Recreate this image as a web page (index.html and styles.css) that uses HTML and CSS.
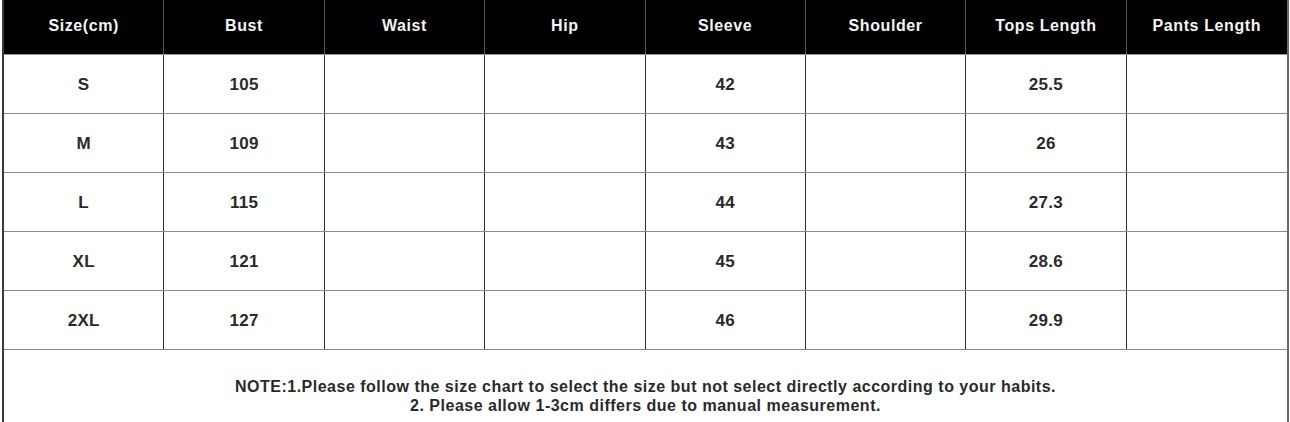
FILE: index.html
```html
<!DOCTYPE html>
<html>
<head>
<meta charset="utf-8">
<link rel="stylesheet" href="styles.css">
</head>
<body>
<div class="chart">
  <div class="row head">
    <div class="cell">Size(cm)</div>
    <div class="cell">Bust</div>
    <div class="cell">Waist</div>
    <div class="cell">Hip</div>
    <div class="cell">Sleeve</div>
    <div class="cell">Shoulder</div>
    <div class="cell">Tops Length</div>
    <div class="cell">Pants Length</div>
  </div>
  <div class="row">
    <div class="cell">S</div><div class="cell">105</div><div class="cell"></div><div class="cell"></div><div class="cell">42</div><div class="cell"></div><div class="cell">25.5</div><div class="cell"></div>
  </div>
  <div class="row">
    <div class="cell">M</div><div class="cell">109</div><div class="cell"></div><div class="cell"></div><div class="cell">43</div><div class="cell"></div><div class="cell">26</div><div class="cell"></div>
  </div>
  <div class="row">
    <div class="cell">L</div><div class="cell">115</div><div class="cell"></div><div class="cell"></div><div class="cell">44</div><div class="cell"></div><div class="cell">27.3</div><div class="cell"></div>
  </div>
  <div class="row">
    <div class="cell">XL</div><div class="cell">121</div><div class="cell"></div><div class="cell"></div><div class="cell">45</div><div class="cell"></div><div class="cell">28.6</div><div class="cell"></div>
  </div>
  <div class="row">
    <div class="cell">2XL</div><div class="cell">127</div><div class="cell"></div><div class="cell"></div><div class="cell">46</div><div class="cell"></div><div class="cell">29.9</div><div class="cell"></div>
  </div>
  <div class="note">
    <p>NOTE:1.Please follow the size chart to select the size but not select directly according to your habits.</p>
    <p>2. Please allow 1-3cm differs due to manual measurement.</p>
  </div>
</div>
</body>
</html>
```
FILE: styles.css
```css
html, body {
  margin: 0;
  padding: 0;
  background: #ffffff;
}
body {
  font-family: "Liberation Sans", Arial, sans-serif;
  overflow: hidden;
  height: 422px;
}
* {
  box-sizing: border-box;
}
.chart {
  margin-left: 2px;
  width: 1287px;
  border-left: 2px solid #3a3a3a;
  border-right: 2px solid #6a6a6a;
}
.row {
  display: grid;
  grid-template-columns: repeat(8, 1fr);
  height: 59px;
  border-bottom: 1px solid #8a8a8a;
}
.cell {
  display: flex;
  align-items: center;
  justify-content: center;
  border-right: 1px solid #2e2e2e;
  font-weight: bold;
  font-size: 17px;
  letter-spacing: 0.3px;
  color: #2a2a2a;
  padding-top: 2px;
}
.row .cell:last-child {
  border-right: none;
}
.head {
  height: 55px;
  background: #000000;
  border-bottom: 1px solid #9a9a9a;
}
.head .cell {
  color: #f4f4f4;
  font-size: 16px;
  letter-spacing: 0.6px;
  padding-top: 0;
  padding-bottom: 3px;
  border-right: 1px solid #555555;
}
.head .cell:last-child {
  border-right: none;
}
.note {
  padding-top: 27px;
  height: 72px;
  text-align: center;
}
.note p {
  margin: 0;
  font-size: 16px;
  letter-spacing: 0.5px;
  font-weight: bold;
  line-height: 19px;
  color: #2a2a2a;
}
```
